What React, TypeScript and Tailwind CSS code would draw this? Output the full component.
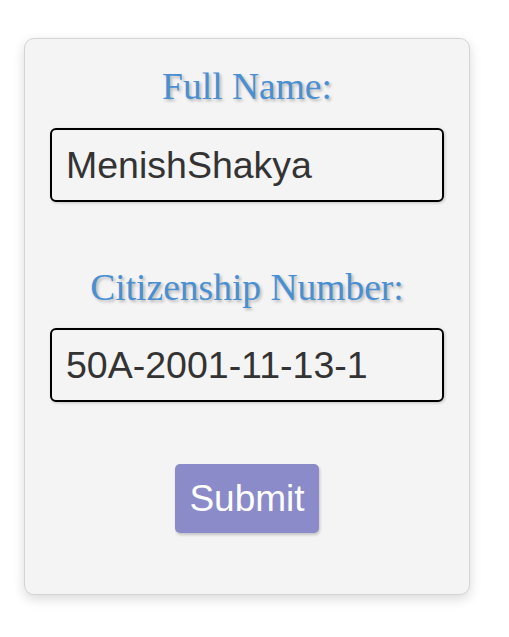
export default function App() {
  return (
    <div className="min-h-screen bg-white pt-[38px] pl-[24px]">
      <div className="w-[446px] h-[557px] bg-[#f4f4f4] border border-[#d4d4d4] rounded-[10px] shadow-[0_4px_12px_rgba(0,0,0,0.15)] flex flex-col items-center pt-[27px] px-[25px]">
        <label className="font-['Liberation_Serif',serif] text-[37.5px] leading-[42px] text-[#4a8fd1] [text-shadow:2px_2px_3px_rgba(0,0,0,0.25)]">
          Full Name:
        </label>
        <input
          defaultValue="MenishShakya"
          className="mt-[20px] w-[394px] h-[74px] bg-[#f4f4f4] border-2 border-black rounded-[6px] px-[14px] font-['Liberation_Sans',sans-serif] text-[37.5px] text-[#333] shadow-[1px_1px_3px_rgba(0,0,0,0.2)] outline-none"
        />
        <label className="mt-[65px] font-['Liberation_Serif',serif] text-[37.5px] leading-[42px] text-[#4a8fd1] [text-shadow:2px_2px_3px_rgba(0,0,0,0.25)]">
          Citizenship Number:
        </label>
        <input
          defaultValue="50A-2001-11-13-1"
          className="mt-[19px] w-[394px] h-[74px] bg-[#f4f4f4] border-2 border-black rounded-[6px] px-[14px] font-['Liberation_Sans',sans-serif] text-[37.5px] text-[#333] shadow-[1px_1px_3px_rgba(0,0,0,0.2)] outline-none"
        />
        <button className="mt-[62px] w-[144px] h-[69px] bg-[#8b8bc9] rounded-[5px] text-white font-['Liberation_Sans',sans-serif] text-[37px] shadow-[1px_2px_3px_rgba(0,0,0,0.2)]">
          Submit
        </button>
      </div>
    </div>
  );
}
